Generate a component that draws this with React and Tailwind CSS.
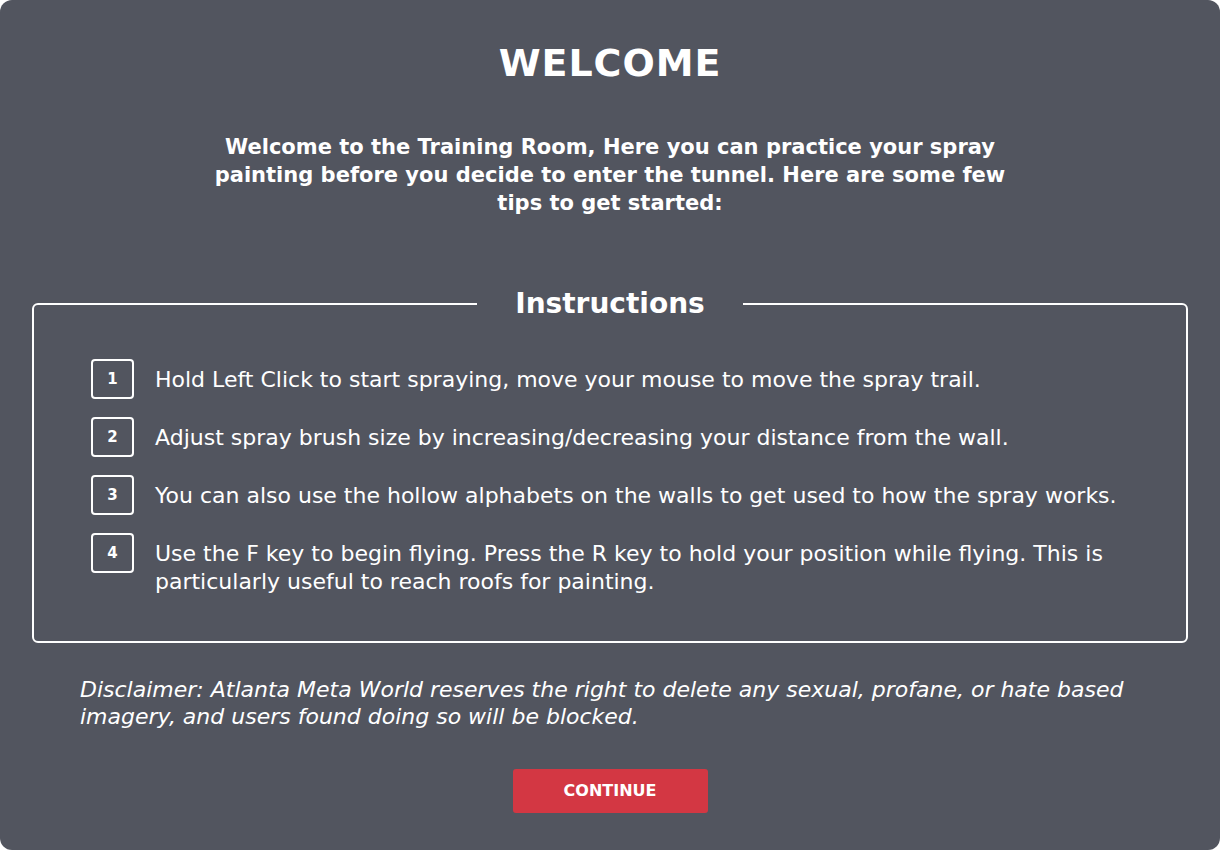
import React from 'react';

const tips = [
  'Hold Left Click to start spraying, move your mouse to move the spray trail.',
  'Adjust spray brush size by increasing/decreasing your distance from the wall.',
  'You can also use the hollow alphabets on the walls to get used to how the spray works.',
  'Use the F key to begin flying. Press the R key to hold your position while flying. This is particularly useful to reach roofs for painting.',
];

export default function App() {
  return (
    <div className="w-[1220px] h-[850px] rounded-xl bg-[#52555f] text-white flex flex-col items-center pt-[40px] font-['DejaVu_Sans',sans-serif]">
      <h1 className="text-[38px] leading-[46px] font-bold tracking-wide">WELCOME</h1>

      <p className="mt-[47px] max-w-[800px] text-center text-[21px] leading-[28px] font-semibold">
        Welcome to the Training Room, Here you can practice your spray painting before you decide to enter the tunnel. Here are some few tips to get started:
      </p>

      <fieldset className="mt-[70px] w-[1156px] border-2 border-white rounded-md px-[57px] pt-[38px] pb-[45px]">
        <legend className="mx-auto px-[38px] text-[28px] leading-[34px] font-bold">Instructions</legend>
        <ol className="flex flex-col gap-[18px]">
          {tips.map((tip, i) => (
            <li key={i} className="flex items-start gap-[21px]">
              <span className="shrink-0 w-[43px] h-[40px] border-2 border-white rounded-[4px] flex items-center justify-center text-[15px] font-bold">
                {i + 1}
              </span>
              <span className="pt-[7px] text-[22px] leading-[28px]">{tip}</span>
            </li>
          ))}
        </ol>
      </fieldset>

      <p className="mt-[33px] w-full px-[80px] text-[22px] leading-[27px] italic">
        Disclaimer: Atlanta Meta World reserves the right to delete any sexual, profane, or hate based imagery, and users found doing so will be blocked.
      </p>

      <button className="mt-[39px] w-[195px] h-[44px] rounded-[3px] bg-[#d33743] text-[16px] font-bold">
        CONTINUE
      </button>
    </div>
  );
}
